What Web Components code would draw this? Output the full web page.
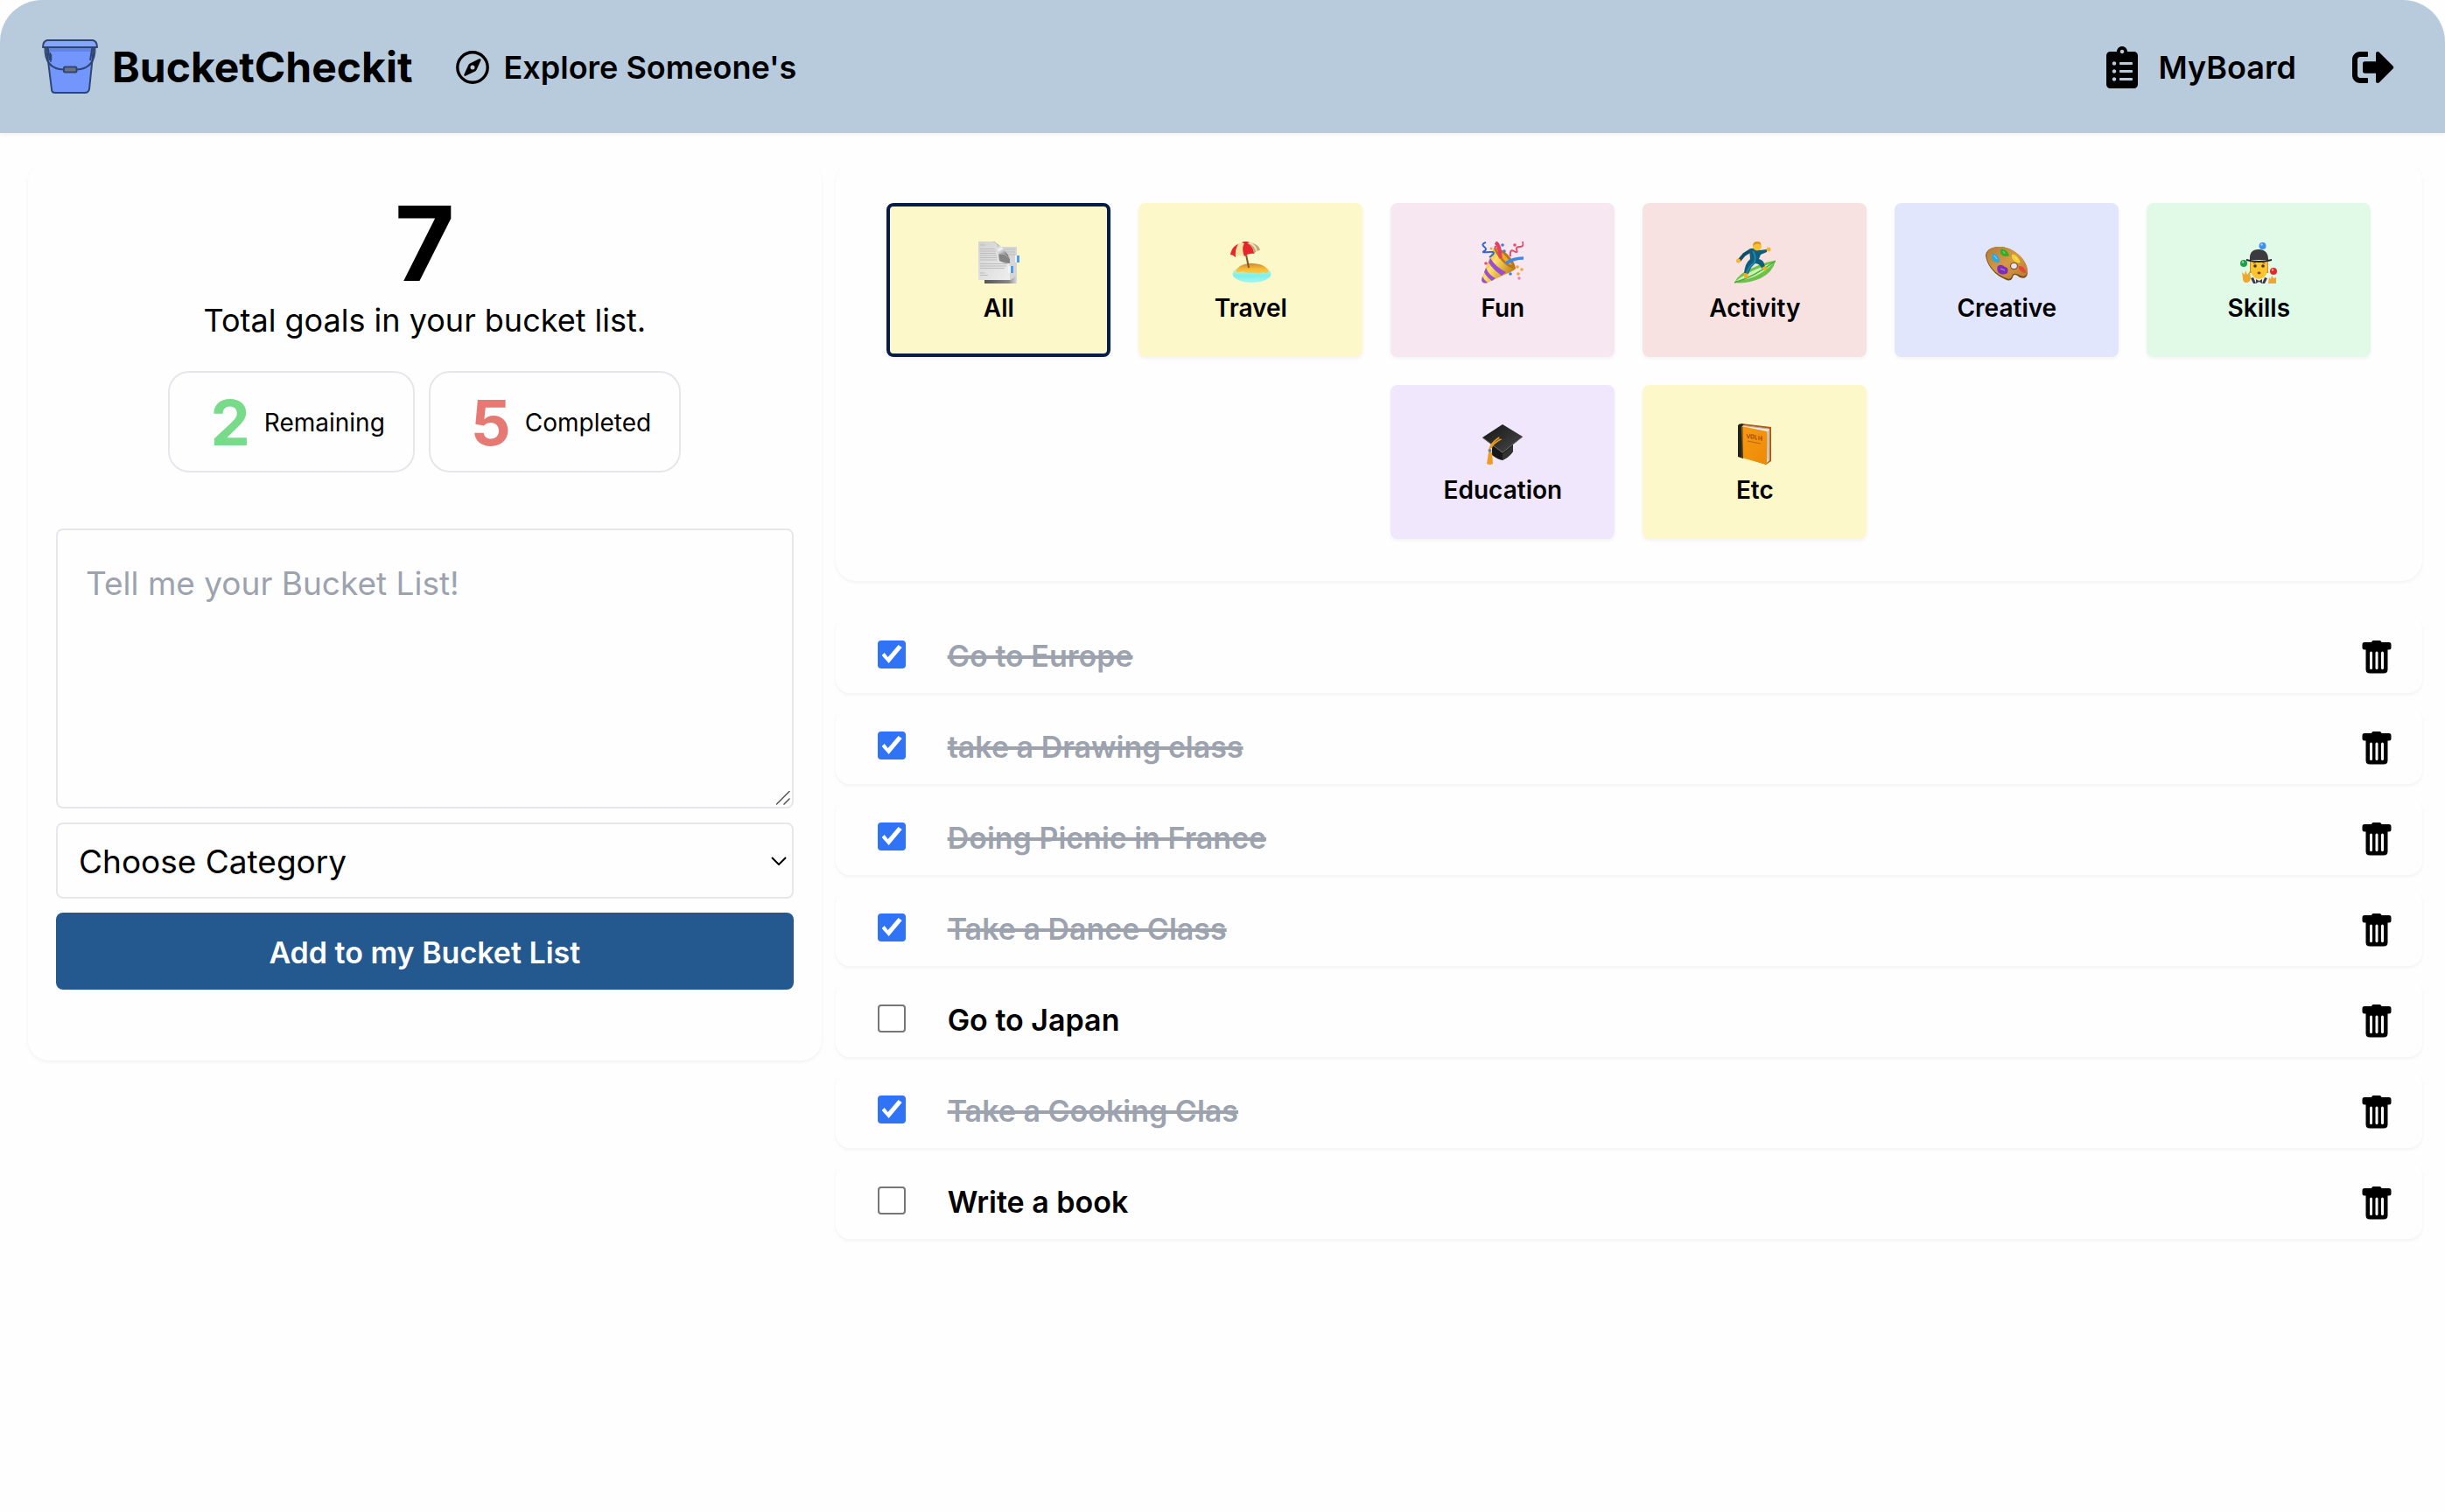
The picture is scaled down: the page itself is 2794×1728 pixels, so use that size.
<!DOCTYPE html>
<html lang="en">
<head>
<meta charset="utf-8">
<title>BucketCheckit</title>
<style>
  :root {
    --text-title: 48px;
    --text-field: 37px;
    --text-lg: 36px;
    --text-goal: 34px;
    --text-sm: 28px;
    --surface: #fefefe;
    --shadow: 0 2px 4px rgba(0, 0, 0, .05);
    --line: #e5e7eb;
    --muted: #9ca3af;
  }
  body { margin: 0; background: var(--surface); color: #000; font-family: Inter, "Liberation Sans", sans-serif; font-size: var(--text-lg); }
</style>
</head>
<body>
<bucket-app></bucket-app>

<script>
const base = `<style>
  *, *::before, *::after { box-sizing: border-box; }
  h1, h2, p, ul { margin: 0; padding: 0; }
  button, input, select, textarea { font: inherit; color: inherit; margin: 0; }
  button { cursor: pointer; }
  a { color: inherit; text-decoration: none; }
  svg { display: block; flex: none; }
</style>`;

function define(name, markup) {
  customElements.define(name, class extends HTMLElement {
    connectedCallback() {
      if (this.shadowRoot) return;
      const template = document.createElement('template');
      template.innerHTML = base + (typeof markup === 'function' ? markup(this) : markup);
      this.attachShadow({ mode: 'open' }).append(template.content.cloneNode(true));
    }
  });
}

/* ---------- category pictures ---------- */
const art = {
  all: `
    <defs><linearGradient id="p" x1="0" y1="0" x2="1" y2="1"><stop offset="0" stop-color="#d2d2d2"/><stop offset="1" stop-color="#eee"/></linearGradient>
    <linearGradient id="c" x1="0" y1="0" x2=".6" y2="1"><stop offset="0" stop-color="#777"/><stop offset=".5" stop-color="#f4f4f4"/><stop offset="1" stop-color="#555"/></linearGradient>
    <linearGradient id="s" x1="0" x2="1"><stop offset="0" stop-color="#555"/><stop offset=".75" stop-color="#888"/><stop offset="1" stop-color="#ddd"/></linearGradient></defs>
    <path d="M9 6H45V48H9Z" fill="#d6d6d6"/><path d="M8 44H38L45 38V48H8Z" fill="url(#s)"/>
    <path d="M30 9H43M32 12H43M34 15H43" stroke="#bbb"/>
    <path d="M1 0H20Q23 1 24 8L37 20V44H1Z" fill="url(#p)"/>
    <path d="M3 4H9M3 8.500H20M3 11H21M3 13.500H21M3 16H22M3 18.500H22M3 21H22M3 25.500H34M3 28H33M3 30.500H31M3 36H8M3 38.500H12" stroke="#bdbdbd"/>
    <path d="M24 14Q32 13 37 20V25Q30 25 25 22Z" fill="#6b6b6b" opacity=".8"/>
    <path d="M17 0C24 0 23 9 24 15Q34 12 37 21C35 13 27 3 17 0Z" fill="url(#c)"/>
    <path d="M43 16H45V24H43Z M35 28H38V36H35Z" fill="#f3f3f3"/><path d="M45 16H48V24H45Z M38 28H41V36H38Z" fill="#4d9af5"/>`,
  travel: `
    <defs><linearGradient id="w" x1="0" y1="0" x2="0" y2="1"><stop offset="0" stop-color="#e9f7d2"/><stop offset=".6" stop-color="#7df0ea"/><stop offset="1" stop-color="#a8f6f0"/></linearGradient>
    <linearGradient id="s" x1="0" y1="0" x2="0" y2="1"><stop offset="0" stop-color="#c98a35"/><stop offset=".5" stop-color="#f8b834"/><stop offset="1" stop-color="#ffcf45"/></linearGradient></defs>
    <ellipse cx="25.500" cy="37" rx="22" ry="10" fill="url(#w)"/>
    <path d="M7 34C10 27 18 25 25 25C36 25 44 29 45 35C42 38 40 34 37 36C32 38 30 35 26 36C20 37 16 33 12 35Q9 36 7 34Z" fill="url(#s)"/>
    <path d="M18 10L22 30" stroke="#8a5526" stroke-width="2"/>
    <path d="M1 15C2 6 9 0 19 1C28 0 34 5 35 10C31 11 30 12 28 14C24 13 20 15 17 17C13 15 10 16 7 18Q4 15 1 15Z" fill="#f7e3a4"/>
    <path d="M1 15C2 9 5 5 10 3Q6 9 7 18Q4 15 1 15Z M17 17C14 9 15 4 18 1C25 3 28 9 28 14Q22 13 17 17Z" fill="#e5262b"/>
    <path d="M19 1C27 1 34 4 35 10Q31 10 28 14Q28 5 19 1Z" fill="#b9a877"/><path d="M22 1Q30 4 31 12" stroke="#eadfb6" stroke-width="2" fill="none"/>
    <path d="M14 1Q18 -1 23 1L18 3Z" fill="#d9251f"/>`,
  fun: `
    <defs><linearGradient id="g" x1="0" y1="0" x2="1" y2=".6"><stop offset="0" stop-color="#c78a1c"/><stop offset=".45" stop-color="#ffe06a"/><stop offset="1" stop-color="#c07a12"/></linearGradient></defs>
    <path d="M14 7L39 31C37 34 30 36 24 39L5 48Q0 48 0 43L8 22Z" fill="url(#g)"/>
    <path d="M14 7Q22 7 30 15T39 31Q31 31 23 22T14 7Z" fill="#b9761a"/><path d="M17 9Q26 12 35 27Q27 26 17 9Z" fill="#f0a92a"/>
    <path d="M10 19Q16 29 28 35L23 39Q13 32 8 24Z M5 30Q8 38 16 42L12 45Q6 41 3 35Z M1 40Q3 44 7 47Q1 49 0 44Z" fill="#9a4fd1"/>
    <path d="M16 1C22 5 20 12 22 19" fill="none" stroke="#e83c65" stroke-width="4"/>
    <path d="M48 19Q36 19 28 25" fill="none" stroke="#3f86ea" stroke-width="3.500"/>
    <path d="M5 1Q-1 3 3 6T3 11T9 12T9 18" fill="none" stroke="#3465c9" stroke-width="2"/>
    <path d="M47 0Q49 6 44 6T40 9Q42 14 37 11T33 17" fill="none" stroke="#e24a70" stroke-width="2"/>
    <g fill="#3f7fe0"><circle cx="24" cy="4" r="1.800"/><circle cx="26" cy="11" r="1.800"/><circle cx="33" cy="37" r="1.800"/></g>
    <g fill="#ea4b78"><circle cx="38" cy="4" r="1.800"/><circle cx="16" cy="6" r="1.500"/><circle cx="5" cy="25" r="1.800"/></g>
    <g fill="#f2a33a"><circle cx="46" cy="32" r="1.800"/><circle cx="42" cy="37" r="1.800"/><circle cx="41" cy="29" r="1.800"/><circle cx="11" cy="8" r="1.500"/></g><circle cx="43" cy="42" r="1.800" fill="#ec83b4"/>`,
  activity: `
    <path d="M1 47Q6 36 22 30Q40 22 48 22Q45 35 31 42Q15 49 1 47Z" fill="#6cc24a"/>
    <path d="M3 45Q16 34 46 24Q37 34 24 40Q12 45 3 45Z" fill="#c9f3b0"/><path d="M1 47Q24 40 48 22" fill="none" stroke="#4faa38" stroke-width="1.500"/>
    <path d="M7 21L12 15L20 10" fill="none" stroke="#0e4f66" stroke-width="4" stroke-linejoin="round" stroke-linecap="round"/>
    <path d="M18 9Q24 6 30 10L38 9V12L31 15L29 20Q35 21 36 29L32 31Q31 26 25 25Q20 28 17 37L12 36Q13 25 19 20Z" fill="#0f5f7c"/>
    <path d="M22 11Q26 16 24 24Q18 28 15 36" fill="none" stroke="#2388a8" stroke-width="2"/>
    <circle cx="27" cy="5.500" r="5" fill="#fbc02d"/><path d="M22 5Q22 0 27 0T31 4Q27 1 22 5Z" fill="#d99a1b"/>
    <circle cx="5.500" cy="22" r="2.500" fill="#f6b52a"/><circle cx="40" cy="9" r="2.500" fill="#f6b52a"/>
    <path d="M12 36L17 37L16 42L12 41Z M32 30L36 28L39 31L35 33Z" fill="#f6ac1e"/>`,
  creative: `
    <defs><linearGradient id="b" x1="0" y1="0" x2="1" y2="1"><stop offset="0" stop-color="#b27c35"/><stop offset=".5" stop-color="#d69a45"/><stop offset="1" stop-color="#b87a30"/></linearGradient></defs>
    <path d="M14 6C32 5 48 22 48 36Q47 44 39 41Q32 35 31 41Q29 46 24 44C10 39 1 26 0 16Q1 7 14 6Z" fill="#7c4c17"/>
    <path d="M14 6C32 5 48 21 48 33Q47 42 40 39Q31 34 30 40Q28 44 24 42C10 37 1 25 1 15Q2 7 14 6Z" fill="url(#b)"/>
    <ellipse cx="32.500" cy="28" rx="4" ry="3.500" fill="#e1e6fd" stroke="#845218" stroke-width="1.200"/>
    <path d="M7 15Q10 11 14 17T15 24Q9 25 7 19Z" fill="#31a9df"/><path d="M17 9Q21 7 25 12T24 17Q18 17 17 13Z" fill="#36ad27"/>
    <path d="M30 15Q34 14 38 20T36 24Q31 22 30 18Z" fill="#f2d233"/><path d="M38 28Q43 27 46 34Q46 38 42 35T38 31Z" fill="#e9463b"/>
    <path d="M14 28Q18 25 22 29Q27 30 25 36Q20 39 15 36Q12 32 14 28Z" fill="#7d2cbd"/>
    <path d="M10 16L13 20M20 11L22 14M34 18L36 21M17 31L22 33" stroke="#fff" opacity=".5"/>`,
  skills: `
    <path d="M6 48Q6 42 12 41H36Q43 42 43 48Z" fill="#f1f1f1"/><path d="M15 42L18 48H21L18 41Z M34 42L31 48H28L31 41Z" fill="#3c3c46"/>
    <path d="M14 23H35V34Q36 36 34 36H15Q13 36 14 34Z" fill="#d68e1e"/>
    <path d="M15 22H34V33Q33 42 24.500 43Q16 42 15 33Z" fill="#fcc52f"/>
    <circle cx="20" cy="28" r="1.800" fill="#43301a"/><circle cx="29" cy="28" r="1.800" fill="#43301a"/><path d="M18 25L21 24M28 24L31 25" stroke="#8f5f16"/><ellipse cx="24.500" cy="36" rx="2" ry="1.400" fill="#8f3f21"/>
    <path d="M14 21Q13 9 24 9T35 21Z" fill="#3b3b3f"/><path d="M10 20Q24 24 39 20V22Q24 26 10 22Z" fill="#222226"/>
    <path d="M21 43L24.500 45L28 43V48L24.500 46L21 48Z" fill="#3c4450"/>
    <path d="M5 35L8 38L9 33L11 38L14 34L15 42Q14 47 10 47T6 42Z M36 41L38 43L39 39L41 42L44 41V48H35Z" fill="#eda82c"/>
    <circle cx="28.500" cy="5" r="4" fill="#3f8ef0"/><circle cx="27.500" cy="3.500" r="1.200" fill="#a9d0ff"/>
    <circle cx="7" cy="25" r="4" fill="#1fa048"/><circle cx="6" cy="23.500" r="1.200" fill="#8fe0a3"/>
    <circle cx="41" cy="34" r="4" fill="#e02b2b"/><circle cx="40" cy="32.500" r="1.200" fill="#ff9f9f"/>`,
  education: `
    <defs><linearGradient id="k" x1="0" y1="0" x2="1" y2="1"><stop offset="0" stop-color="#151515"/><stop offset="1" stop-color="#4a4a4a"/></linearGradient></defs>
    <path d="M12 24V36Q18 41 24 42Q32 38 36 32V22Z" fill="#171717"/><path d="M24 42Q32 38 36 32V25L24 35Z" fill="#333"/>
    <path d="M24 1L47 15L24 34L1 16Z" fill="url(#k)"/><path d="M1 16L24 33L47 15" fill="none" stroke="#6b6b6b"/>
    <path d="M24 14Q10 21 9 31M26 16Q13 22 11 28" fill="none" stroke="#e79c1d" stroke-width="1.800"/>
    <ellipse cx="24" cy="15" rx="4" ry="3" fill="#2c2c2c"/><circle cx="9.500" cy="31" r="2" fill="#7d7d7d"/>
    <path d="M8 33H12L13 46Q10 48 6 46Z" fill="#ec9d25"/>`,
  etc: `
    <defs><linearGradient id="o" x1="0" y1="0" x2="1" y2="1"><stop offset="0" stop-color="#f79a13"/><stop offset="1" stop-color="#ee8a05"/></linearGradient></defs>
    <path d="M9 0L43 4V43L37 47L9 38Z" fill="#b65a0a"/><path d="M9 2L41 6V42L37 46L9 37Z" fill="#e8e8e8"/><path d="M12 2.500L40 6M39.500 8V42" stroke="#aaa"/>
    <path d="M9 3L38 9Q39 9 38 47L9 39Z" fill="url(#o)"/>
    <path d="M5 2Q7 -1 12 1L9 4L11 40L5 38Z" fill="#20251f"/><path d="M10 4V39" stroke="#7a4a0e" stroke-width="1.200"/>
    <path d="M15 12L17 17L19 12M20 13H23V17H20ZM25 13V18H27M29 14V19M30 17H33M32 14V20" fill="none" stroke="#a3470c"/><path d="M16 20L31 23" stroke="#b9650f"/>`
};

/* ---------- header ---------- */
define('app-header', `<style>
  :host { display: block; }
  header { display: flex; align-items: center; justify-content: space-between; height: 152px; padding: 2px 58px 0 48px;
    background: #b8cbdd; border-radius: 48px 48px 0 0; box-shadow: var(--shadow); }
  nav { display: flex; align-items: center; gap: 50px; }
  nav.account { gap: 64px; }
  a { display: flex; align-items: center; gap: 16px; font-weight: 600; }
  .account a { gap: 24px; }
  h1 { font-size: var(--text-title); font-weight: 700; line-height: 64px; }
</style>
<header>
  <nav aria-label="Main">
    <a href="#home">
      <svg width="64" height="64" viewBox="0 0 64 64" stroke="#2f4673" stroke-width="2" stroke-linejoin="round" aria-hidden="true">
        <path d="M5 9H59L54 57Q53 61 49 61H15Q11 61 11 57Z" fill="#7296fb"/>
        <path d="M6 10H58L57 14H8Z" fill="#6184e8" stroke="none"/>
        <path d="M9.500 15L10 26M10.500 17V24" fill="none" stroke-width="1.500"/>
        <path d="M3.500 9C3 25 10 34 25 34.500H39C54 34 61 25 60.500 9M6.500 9L9 24M57.500 9L55 24" fill="none"/>
        <path d="M6 1H58Q63 2 63 9H1Q1 2 6 1Z" fill="#85a5fd"/>
        <rect x="25" y="31.500" width="14.500" height="6" rx="1.500" fill="#6b7280"/>
      </svg>
      <h1>BucketCheckit</h1>
    </a>
    <a href="#explore">
      <svg width="38" height="38" viewBox="0 0 38 38" aria-hidden="true">
        <circle cx="19" cy="19" r="17.200" fill="none" stroke="#000" stroke-width="3.400"/>
        <path fill-rule="evenodd" d="M26.500 9.300L16 14.600Q14.800 15.300 14.200 16.500L9.300 27.300Q9 29.300 11 28.800L22 23.400Q23.200 22.700 23.700 21.500L28.600 10.800Q28.800 8.600 26.500 9.300ZM19 16.600A2.500 2.500 0 1 1 19 21.600A2.500 2.500 0 1 1 19 16.600Z"/>
      </svg>
      <span>Explore Someone's</span>
    </a>
  </nav>
  <nav class="account" aria-label="Account">
    <a href="#board">
      <svg width="36" height="48" viewBox="0 0 384 512" aria-hidden="true"><path fill-rule="evenodd" d="M336 64h-80c0-35.300-28.700-64-64-64s-64 28.700-64 64H48C21.500 64 0 85.500 0 112v352c0 26.500 21.500 48 48 48h288c26.500 0 48-21.500 48-48V112c0-26.500-21.500-48-48-48zM96 424c-13.300 0-24-10.700-24-24s10.700-24 24-24 24 10.700 24 24-10.700 24-24 24zm0-96c-13.300 0-24-10.700-24-24s10.700-24 24-24 24 10.700 24 24-10.700 24-24 24zm0-96c-13.300 0-24-10.700-24-24s10.700-24 24-24 24 10.700 24 24-10.700 24-24 24zm96-192c13.300 0 24 10.700 24 24s-10.700 24-24 24-24-10.700-24-24 10.700-24 24-24zm128 368c0 4.400-3.600 8-8 8H168c-4.400 0-8-3.600-8-8v-16c0-4.400 3.600-8 8-8h144c4.400 0 8 3.600 8 8v16zm0-96c0 4.400-3.600 8-8 8H168c-4.400 0-8-3.600-8-8v-16c0-4.400 3.600-8 8-8h144c4.400 0 8 3.600 8 8v16zm0-96c0 4.400-3.600 8-8 8H168c-4.400 0-8-3.600-8-8v-16c0-4.400 3.600-8 8-8h144c4.400 0 8 3.600 8 8v16z"/></svg>
      <span>MyBoard</span>
    </a>
    <a href="#logout" aria-label="Log out">
      <svg width="48" height="48" viewBox="0 0 512 512" aria-hidden="true"><path d="M497 273L329 441c-15 15-41 4.500-41-17v-96H152c-13.300 0-24-10.700-24-24v-96c0-13.300 10.700-24 24-24h136V88c0-21.400 25.900-32 41-17l168 168c9.300 9.400 9.300 24.600 0 34zM192 436v-40c0-6.600-5.400-12-12-12H96c-17.700 0-32-14.300-32-32V160c0-17.700 14.300-32 32-32h84c6.600 0 12-5.400 12-12V76c0-6.600-5.400-12-12-12H96c-53 0-96 43-96 96v192c0 53 43 96 96 96h84c6.600 0 12-5.400 12-12z"/></svg>
    </a>
  </nav>
</header>`);

/* ---------- left column ---------- */
define('surface-card', `<style>
  :host { display: block; background: var(--surface); border-radius: 24px; box-shadow: var(--shadow); }
</style><slot></slot>`);

define('stat-chip', el => `<style>
  :host { display: flex; align-items: center; gap: 16px; height: 116px; padding: 2px 32px 0 46px; border: 2px solid var(--line); border-radius: 24px; }
  strong { font-size: 72px; line-height: 80px; font-weight: 700; color: ${el.getAttribute('tone')}; }
  span { font-size: var(--text-sm); }
</style><strong>${el.getAttribute('value')}</strong><span><slot></slot></span>`);

define('goal-summary', `<style>
  :host { display: flex; flex-direction: column; align-items: center; }
  h2 { font-size: 118px; line-height: 124px; font-weight: 700; }
  p { line-height: 52px; }
  div { display: flex; gap: 16px; margin-top: 32px; }
</style>
<h2>7</h2>
<p>Total goals in your bucket list.</p>
<div>
  <stat-chip value="2" tone="#77db89">Remaining</stat-chip>
  <stat-chip value="5" tone="#e77975">Completed</stat-chip>
</div>`);

define('goal-form', `<style>
  :host { display: block; font-size: var(--text-field); }
  form { display: flex; flex-direction: column; gap: 16px; }
  .field { display: grid; }
  .field > * { grid-area: 1 / 1; }
  .field > svg { pointer-events: none; }
  textarea, select { display: block; width: 100%; background: var(--surface); border: 2px solid var(--line); border-radius: 8px; }
  textarea { height: 320px; padding: 32px; line-height: 58px; resize: none; }
  textarea::placeholder { color: var(--muted); opacity: 1; }
  .grip { place-self: end; margin: 4px; }
  select { height: 87px; padding: 2px 48px 0 24px; appearance: none; }
  .chevron { place-self: center end; margin-right: 8px; }
  button { height: 88px; padding: 2px 0 0; border: 0; border-radius: 8px; background: #24598f; color: #fff; font-size: var(--text-goal); font-weight: 600; }
</style>
<form>
  <div class="field">
    <textarea aria-label="New goal" placeholder="Tell me your Bucket List!"></textarea>
    <svg class="grip" width="16" height="16" viewBox="0 0 16 16" stroke="#555" stroke-width="1.500" aria-hidden="true"><path d="M0 15.500L15.500 0M8.500 15.500L15.500 8.500"/></svg>
  </div>
  <div class="field">
    <select aria-label="Category"><option>Choose Category</option></select>
    <svg class="chevron" width="18" height="10" viewBox="0 0 18 10" fill="none" stroke="#000" stroke-width="2" aria-hidden="true"><path d="M1 1L9 9L17 1"/></svg>
  </div>
  <button type="button">Add to my Bucket List</button>
</form>`);

/* ---------- right column ---------- */
define('category-tile', el => `<style>
  :host { display: block; width: 256px; }
  button { display: flex; flex-direction: column; align-items: center; justify-content: center; gap: 8px; width: 100%; height: 176px; padding: 8px 0 0;
    border: 4px solid transparent; border-radius: 8px; background: ${el.getAttribute('tint')} border-box; box-shadow: var(--shadow); font-size: var(--text-sm); line-height: 40px; font-weight: 600; }
  button[aria-pressed="true"] { border-color: #071d49; }
</style>
<button type="button" aria-pressed="${el.hasAttribute('active')}">
  <svg width="48" height="48" viewBox="0 0 48 48" aria-hidden="true">${art[el.getAttribute('art')]}</svg>
  <span><slot></slot></span>
</button>`);

define('category-filter', `<style>
  :host { display: flex; flex-wrap: wrap; justify-content: center; gap: 32px; padding: 48px; }
</style>
<category-tile art="all" tint="#fdf8c9" active>All</category-tile>
<category-tile art="travel" tint="#fdf8c9">Travel</category-tile>
<category-tile art="fun" tint="#f7e7f1">Fun</category-tile>
<category-tile art="activity" tint="#f8e2e1">Activity</category-tile>
<category-tile art="creative" tint="#e1e6fd">Creative</category-tile>
<category-tile art="skills" tint="#e1fae8">Skills</category-tile>
<category-tile art="education" tint="#f1e7fd">Education</category-tile>
<category-tile art="etc" tint="#fdf8c9">Etc</category-tile>`);

define('goal-item', el => `<style>
  :host { display: flex; align-items: center; height: 88px; padding: 0 35px 0 48px; background: var(--surface); border-radius: 16px; box-shadow: var(--shadow); font-size: var(--text-goal); font-weight: 600; }
  input { appearance: none; flex: none; width: 32px; height: 32px; border: 2px solid #767676; border-radius: 4px; background: #fff; }
  input:checked { border: 0; background: #3173f6; }
  input:checked::before { content: ""; display: block; width: 32px; height: 32px; background: #fff;
    clip-path: polygon(5px 17px, 8px 14px, 12px 19px, 24px 5px, 28px 8px, 13px 26px); }
  label { flex: 1; padding: 2px 0 0 48px; }
  input:checked + label { color: var(--muted); text-decoration: line-through; text-decoration-thickness: 4px; text-decoration-skip-ink: none; }
  button { padding: 6px 0 0; border: 0; background: none; }
</style>
<input type="checkbox" id="done" ${el.hasAttribute('done') ? 'checked' : ''}>
<label for="done"><slot></slot></label>
<button type="button" aria-label="Delete">
  <svg width="34" height="38" viewBox="0 0 34 38" aria-hidden="true"><path fill-rule="evenodd" d="M13 0H20Q22 0 22.500 2H31Q33.500 2 33.500 4.500V8Q33.500 10.500 31 10.500H29.500V33Q29.500 37.500 25 37.500H9Q4.500 37.500 4.500 33V10.500H3Q.5 10.500 .5 8V4.500Q.5 2 3 2H11Q11.500 0 13 0ZM10.500 12.500Q9 12.500 9 14V31.500Q9 33 10.500 33T12 31.500V14Q12 12.500 10.500 12.500ZM17 12.500Q15.500 12.500 15.500 14V31.500Q15.500 33 17 33T18.500 31.500V14Q18.500 12.500 17 12.500ZM23.500 12.500Q22 12.500 22 14V31.500Q22 33 23.500 33T25 31.500V14Q25 12.500 23.500 12.500Z"/></svg>
</button>`);

define('goal-list', `<style>
  ul { display: flex; flex-direction: column; gap: 16px; list-style: none; }
</style>
<ul>
  <li><goal-item done>Go to Europe</goal-item></li>
  <li><goal-item done>take a Drawing class</goal-item></li>
  <li><goal-item done>Doing Picnic in France</goal-item></li>
  <li><goal-item done>Take a Dance Class</goal-item></li>
  <li><goal-item>Go to Japan</goal-item></li>
  <li><goal-item done>Take a Cooking Clas</goal-item></li>
  <li><goal-item>Write a book</goal-item></li>
</ul>`);

/* ---------- page ---------- */
define('bucket-app', `<style>
  :host { display: block; }
  main { display: grid; grid-template-columns: 1fr 2fr; gap: 16px; align-items: start; padding: 32px 26px 32px 32px; }
  .entry { padding: 32px 32px 81px; }
  goal-form { margin-top: 64px; }
  goal-list { display: block; }
  .content { display: flex; flex-direction: column; gap: 40px; }
</style>
<app-header></app-header>
<main>
  <surface-card class="entry">
    <goal-summary></goal-summary>
    <goal-form></goal-form>
  </surface-card>
  <div class="content">
    <surface-card><category-filter></category-filter></surface-card>
    <goal-list></goal-list>
  </div>
</main>`);
</script>
</body>
</html>
